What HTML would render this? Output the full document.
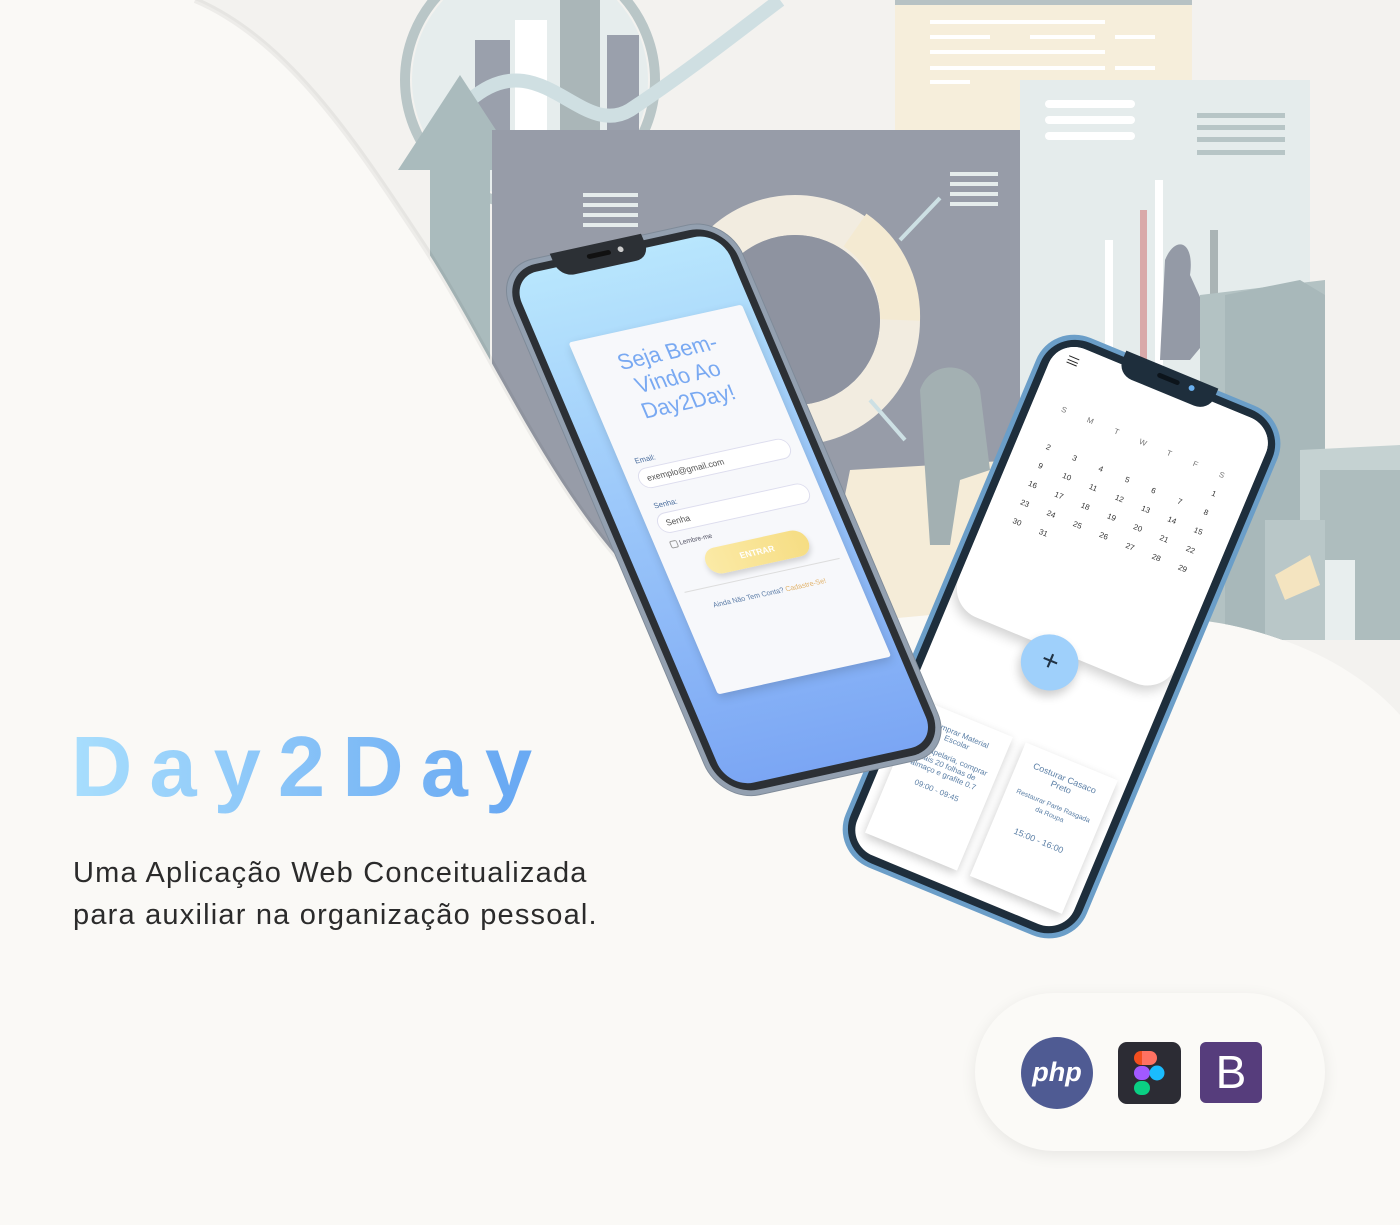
<!DOCTYPE html>
<html><head><meta charset="utf-8"><style>
*{margin:0;padding:0;box-sizing:border-box}
body{width:1400px;height:1225px;background:#faf9f6;position:relative;overflow:hidden;font-family:"Liberation Sans",sans-serif}
.abs{position:absolute}
.phone{position:absolute;left:0;top:0;transform-origin:0 0;border-radius:42px}
.frame{position:absolute;inset:5px;border-radius:38px}
.screen{position:absolute;left:13px;top:13px;right:13px;bottom:13px;border-radius:28px;overflow:hidden}
.notch{position:absolute;left:62px;top:-2px;width:100px;height:26px;border-radius:0 0 16px 16px}
.cal{position:absolute;left:0;top:0;width:100%;height:300px;background:#fff;border-radius:0 0 32px 32px;box-shadow:0 6px 12px rgba(0,0,0,.18)}
.grid{position:absolute;left:18px;top:62px;width:200px;display:grid;grid-template-columns:repeat(7,1fr);row-gap:12px;font-size:8px;color:#333;text-align:center}
.task{position:absolute;background:#fff;box-shadow:0 4px 10px rgba(0,0,0,.2);color:#5b7fa6;text-align:center;font-size:8px;padding:14px 6px}
</style></head><body>

<svg class="abs" style="left:0;top:0" width="1400" height="1225">
<defs>
<clipPath id="c"><path d="M195,0 C290,40 360,150 420,240 C480,330 540,470 620,560 C700,640 820,625 930,615 C1050,605 1150,610 1230,625 C1300,640 1360,670 1400,715 L1400,0 Z"/></clipPath>
</defs>
<g clip-path="url(#c)">
<rect x="0" y="0" width="1400" height="720" fill="#f3f2ef"/>
<circle cx="530" cy="80" r="125" fill="none" stroke="#b9c6c7" stroke-width="10"/>
<circle cx="530" cy="80" r="118" fill="#e6eded"/>
<rect x="475" y="40" width="35" height="100" fill="#9aa0ac"/>
<rect x="515" y="20" width="32" height="120" fill="#fff"/>
<rect x="560" y="0" width="40" height="140" fill="#aab6b8"/>
<rect x="607" y="35" width="32" height="105" fill="#9aa0ac"/>
<path d="M470,100 C540,40 580,140 630,110 C690,70 740,30 780,0" fill="none" stroke="#cfdfe2" stroke-width="14"/>
<rect x="895" y="0" width="297" height="220" fill="#f6eedb"/>
<rect x="895" y="0" width="297" height="5" fill="#b7c2c4"/>
<g fill="#fff"><rect x="930" y="20" width="175" height="4"/><rect x="930" y="35" width="60" height="4"/><rect x="1030" y="35" width="65" height="4"/><rect x="1115" y="35" width="40" height="4"/><rect x="930" y="50" width="175" height="4"/><rect x="930" y="66" width="175" height="4"/><rect x="1115" y="66" width="40" height="4"/><rect x="930" y="80" width="40" height="4"/></g>
<path d="M398,170 L460,75 L522,170 L490,170 L490,600 L430,600 L430,170 Z" fill="#aabbbd"/>
<rect x="492" y="130" width="528" height="480" fill="#979ca8"/>
<rect x="1020" y="80" width="290" height="470" fill="#e5ecec"/>
<g fill="#fff"><rect x="1045" y="100" width="90" height="8" rx="4"/><rect x="1045" y="116" width="90" height="8" rx="4"/><rect x="1045" y="132" width="90" height="8" rx="4"/></g>
<g fill="#b7c5c6"><rect x="1197" y="113" width="88" height="5"/><rect x="1197" y="125" width="88" height="5"/><rect x="1197" y="137" width="88" height="5"/><rect x="1197" y="150" width="88" height="5"/></g>
<g fill="#e5ecec"><rect x="583" y="193" width="55" height="4"/><rect x="583" y="203" width="55" height="4"/><rect x="583" y="213" width="55" height="4"/><rect x="583" y="223" width="55" height="4"/><rect x="950" y="172" width="48" height="4"/><rect x="950" y="182" width="48" height="4"/><rect x="950" y="192" width="48" height="4"/><rect x="950" y="202" width="48" height="4"/></g>
<circle cx="795" cy="320" r="105" fill="none" stroke="#f2ece0" stroke-width="40"/>
<path d="M855,230 A105,105 0 0 1 900,320" fill="none" stroke="#f4ead2" stroke-width="40"/>
<circle cx="795" cy="320" r="85" fill="#8e93a0"/>
<path d="M900,240 L940,198 M870,400 L905,440" stroke="#cde0e4" stroke-width="4"/>
<path d="M850,470 L1020,460 L1020,620 L820,620 Z" fill="#f5ecd8"/>
<rect x="1105" y="240" width="8" height="300" fill="#fff"/><rect x="1140" y="210" width="7" height="300" fill="#d9a9a9"/><rect x="1155" y="180" width="8" height="320" fill="#fff"/><rect x="1210" y="230" width="8" height="300" fill="#aab4b5"/>
<path d="M1165,260 C1175,235 1195,240 1190,275 L1215,330 L1190,360 L1160,360 Z" fill="#949aa6"/>
<path d="M1200,295 L1325,280 L1325,640 L1200,640 Z" fill="#b3c2c3"/><path d="M1225,295 L1300,280 L1325,295 L1325,640 L1225,640 Z" fill="#a8b8ba"/>
<path d="M1300,450 L1400,445 L1400,640 L1300,640 Z" fill="#c5d2d2"/><rect x="1320" y="470" width="80" height="170" fill="#aebdbe"/>
<rect x="1265" y="520" width="60" height="120" fill="#b9c7c8"/>
<path d="M920,390 C930,360 970,360 980,390 L990,470 L960,480 L950,545 L930,545 L925,470 Z" fill="#a3b0b2"/>
<rect x="1325" y="560" width="30" height="80" fill="#e8eeee"/>
<path d="M1275,575 L1310,555 L1320,585 L1285,600 Z" fill="#f4e4c0"/>
</g>
<path d="M195,0 C290,40 360,150 420,240 C480,330 540,470 620,560" fill="none" stroke="rgba(0,0,0,0.05)" stroke-width="6"/>
</svg>

<!-- Phone 2 -->
<div class="phone" style="width:262px;height:595px;background:#6b9ec8;transform:matrix(0.92,0.38,-0.373,0.89,1052,322)">
<div class="frame" style="background:#1e2e3c"></div>
<div class="screen" style="background:#fff">
<div class="cal">
<div class="abs" style="left:16px;top:12px;width:11px;border-top:1.5px solid #222;height:8px;border-bottom:1.5px solid #222"></div>
<div class="abs" style="left:16px;top:16px;width:11px;border-top:1.5px solid #222"></div>
<div class="grid">
<span style="color:#777">S</span><span style="color:#777">M</span><span style="color:#777">T</span><span style="color:#777">W</span><span style="color:#777">T</span><span style="color:#777">F</span><span style="color:#777">S</span>
<span></span><span></span><span></span><span></span><span></span><span></span><span>1</span>
<span>2</span><span>3</span><span>4</span><span>5</span><span>6</span><span>7</span><span>8</span>
<span>9</span><span>10</span><span>11</span><span>12</span><span>13</span><span>14</span><span>15</span>
<span>16</span><span>17</span><span>18</span><span>19</span><span>20</span><span>21</span><span>22</span>
<span>23</span><span>24</span><span>25</span><span>26</span><span>27</span><span>28</span><span>29</span>
<span>30</span><span>31</span>
</div>
</div>
<div class="abs" style="left:88px;top:285px;width:58px;height:58px;border-radius:50%;background:#9fd0fb;box-shadow:0 6px 10px rgba(0,0,0,.2);color:#234;font-size:30px;line-height:56px;text-align:center;font-weight:300">+</div>
<div class="task" style="left:12px;top:400px;width:100px;height:150px">Comprar Material Escolar<br><br>Ir à papelaria, comprar mais 20 folhas de almaço e grafite 0.7<br><br>09:00 - 09:45</div>
<div class="task" style="left:126px;top:400px;width:100px;height:150px;font-size:9px">Costurar Casaco Preto<br><br><span style="font-size:7px">Restaurar Parte Rasgada da Roupa</span><br><br><br>15:00 - 16:00</div>
</div>
<div class="notch" style="background:#1e2e3c;left:80px"><div class="abs" style="left:38px;top:8px;width:24px;height:5px;border-radius:3px;background:#0c141b"></div><div class="abs" style="left:72px;top:7px;width:6px;height:6px;border-radius:50%;background:#6ab0f0"></div></div>
</div>

<!-- Phone 1 -->
<div class="phone" style="width:255px;height:585px;background:#93a0b0;transform:matrix(0.912,-0.2,0.388,0.914,494,268);box-shadow:0 0 0 1px #7e8a98">
<div class="frame" style="background:#2c3035"></div>
<div class="screen" style="background:linear-gradient(180deg,#b8e6fd,#9cc8fa 45%,#7ba6f4)">
<div class="abs" style="left:30px;top:78px;width:190px;height:385px;background:#f7f8fb;box-shadow:0 4px 10px rgba(0,0,0,.15);border-radius:3px;text-align:center">
<div style="color:#79a9f2;font-size:23px;line-height:27px;margin-top:18px">Seja Bem-<br>Vindo Ao<br>Day2Day!</div>
<div style="text-align:left;margin:30px 0 0 16px;font-size:8px;color:#4b6e9e">Email:</div>
<div style="margin:4px 12px 0;height:22px;border-radius:11px;background:#fff;border:1px solid #dde;font-size:9px;text-align:left;padding:5px 8px;color:#555">exemplo@gmail.com</div>
<div style="text-align:left;margin:14px 0 0 16px;font-size:8px;color:#4b6e9e">Senha:</div>
<div style="margin:4px 12px 0;height:22px;border-radius:11px;background:#fff;border:1px solid #dde;font-size:9px;text-align:left;padding:5px 8px;color:#555">Senha</div>
<div style="text-align:left;margin:8px 0 0 16px;font-size:7px;color:#556"><span style="display:inline-block;width:8px;height:8px;border:1px solid #999;border-radius:2px;vertical-align:middle"></span> Lembre-me</div>
<div style="margin:8px 34px 0 44px;height:28px;border-radius:14px;background:linear-gradient(90deg,#fbeaa6,#f6dd83);box-shadow:0 4px 6px rgba(0,0,0,.15);color:#fff;font-size:9px;font-weight:bold;line-height:28px">ENTRAR</div>
<div style="margin:10px 10px 0;border-top:1px solid #ddd"></div>
<div style="margin-top:14px;font-size:7.5px;color:#5a7ba6">Ainda Não Tem Conta? <span style="color:#e1b26a">Cadastre-Se!</span></div>
</div>
</div>
<div class="notch" style="background:#2c3035"><div class="abs" style="left:36px;top:9px;width:26px;height:5px;border-radius:3px;background:#111"></div><div class="abs" style="left:70px;top:8px;width:6px;height:6px;border-radius:50%;background:#ccc"></div></div>
</div>

<div class="abs" style="left:71px;top:718px;font-size:85px;font-weight:bold;letter-spacing:17px;line-height:100px;background:linear-gradient(90deg,#a8defd,#6aaaf3 90%);-webkit-background-clip:text;background-clip:text;color:transparent">Day2Day</div>
<div class="abs" style="left:73px;top:852px;font-size:29px;line-height:42px;color:#2b2b2b;letter-spacing:1.2px">Uma Aplicação Web Conceitualizada<br>para auxiliar na organização pessoal.</div>

<div class="abs" style="left:975px;top:993px;width:350px;height:158px;border-radius:80px;background:#fbfaf7;box-shadow:0 4px 16px rgba(0,0,0,.08)"></div>
<div class="abs" style="left:1021px;top:1037px;width:72px;height:72px;border-radius:50%;background:#4f5b93;color:#fff;font-size:27px;font-weight:bold;font-style:italic;line-height:70px;text-align:center">php</div>
<div class="abs" style="left:1118px;top:1042px;width:63px;height:62px;border-radius:9px;background:#2c2c34">
<svg width="63" height="62"><rect x="16" y="9" width="16" height="14" rx="7" fill="#f24e1e"/><rect x="24" y="9" width="15" height="14" rx="7" fill="#ff7262"/><rect x="24" y="9" width="8" height="14" fill="#ff7262"/><rect x="16" y="24" width="16" height="14" rx="7" fill="#a259ff"/><circle cx="39" cy="31" r="7.5" fill="#1abcfe"/><rect x="16" y="39" width="16" height="14" rx="7" fill="#0acf83"/></svg>
</div>
<div class="abs" style="left:1200px;top:1042px;width:62px;height:61px;border-radius:6px;background:#563d7c;color:#fff;font-size:46px;line-height:61px;text-align:center">B</div>
</body></html>
